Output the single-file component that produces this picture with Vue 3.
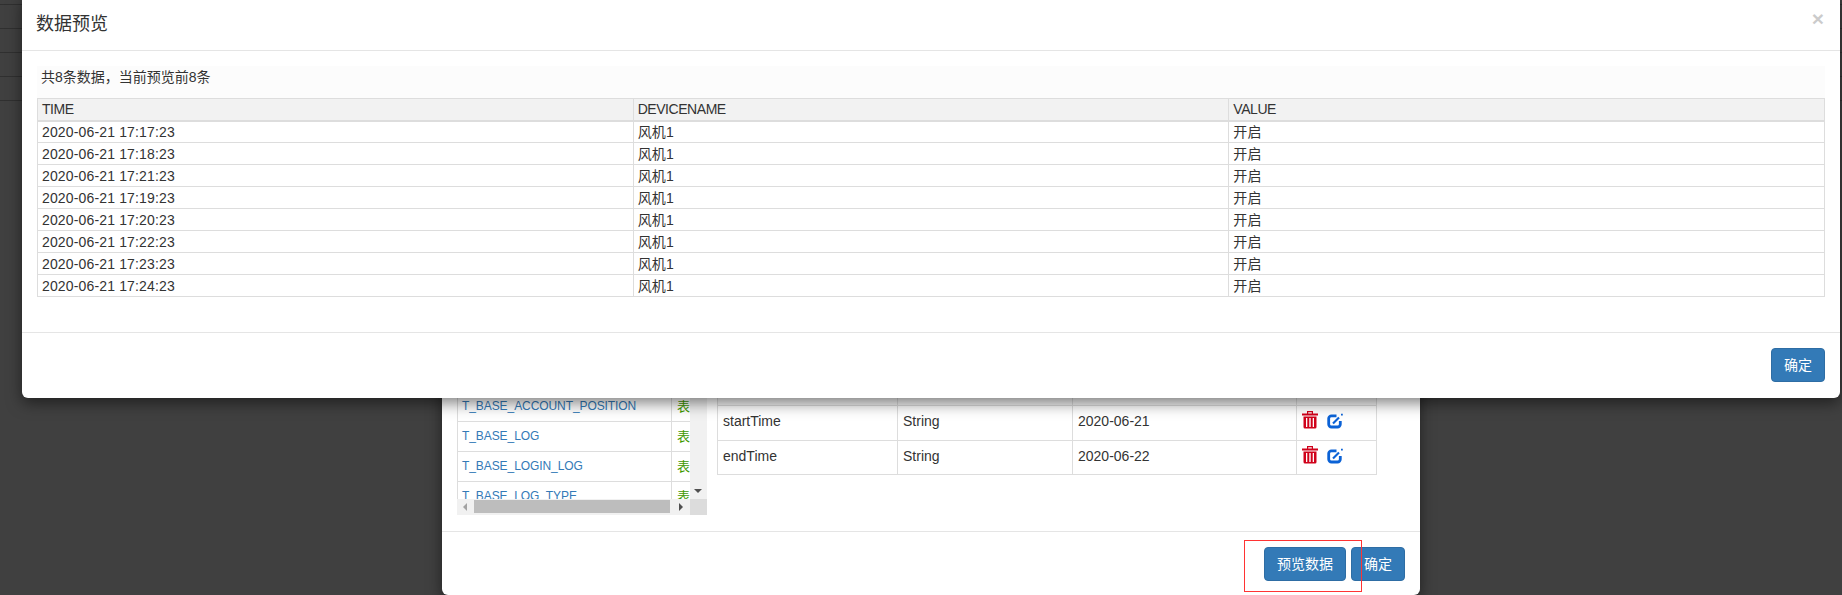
<script setup>
const times = ['17:17:23', '17:18:23', '17:21:23', '17:19:23', '17:20:23', '17:22:23', '17:23:23', '17:24:23']
const rows = times.map((t) => ({ time: `2020-06-21 ${t}`, device: '风机1', value: '开启' }))
const stripes = [0, 1, 2, 3, 4]
const tables = ['T_BASE_ACCOUNT_POSITION', 'T_BASE_LOG', 'T_BASE_LOGIN_LOG', 'T_BASE_LOG_TYPE']
const params = [
  { name: 'startTime', type: 'String', value: '2020-06-21' },
  { name: 'endTime', type: 'String', value: '2020-06-22' },
]
</script>

<template>
  <div class="stage">
    <div class="stripes">
      <div v-for="s in stripes" :key="s" class="stripe"></div>
    </div>

    <section class="modal back">
      <div class="back-body">
        <div class="tree">
          <div class="tree-view">
            <div v-for="t in tables" :key="t" class="tree-row">
              <a class="tree-name">{{ t }}</a>
              <span class="tree-kind">表</span>
            </div>
          </div>
          <div class="track-v"><i class="arrow-down"></i></div>
          <div class="track-h">
            <i class="arrow-left"></i>
            <div class="thumb"></div>
            <i class="arrow-right"></i>
          </div>
          <div class="corner"></div>
        </div>
        <table class="params">
          <colgroup>
            <col class="p1" /><col class="p2" /><col class="p3" /><col class="p4" />
          </colgroup>
          <tbody>
            <tr class="params-head"><td></td><td></td><td></td><td></td></tr>
            <tr v-for="p in params" :key="p.name">
              <td>{{ p.name }}</td>
              <td>{{ p.type }}</td>
              <td>{{ p.value }}</td>
              <td class="ops">
                <svg class="ico" width="16" height="18" viewBox="0 0 16 18">
                  <path fill="#d0021b" d="M5 0h6v2.5h5V4.500H0V2.500h5zM6.200 1.200v1.300h3.600V1.200z" fill-rule="evenodd" />
                  <path fill="#d0021b" d="M1.500 5.500h13V16a1.500 1.500 0 0 1-1.500 1.500H3A1.500 1.500 0 0 1 1.500 16zM4 7v9h1.300V7zm3.300 0v9h1.400V7zm3.400 0v9H12V7z" fill-rule="evenodd" />
                </svg>
                <svg class="ico edit" width="16" height="16" viewBox="0 0 16 16">
                  <path fill="none" stroke="#0b62d6" stroke-width="2.800" d="M9.500 2.800H4.500a2.800 2.800 0 0 0-2.800 2.800v5.600a2.800 2.800 0 0 0 2.800 2.800h6a2.800 2.800 0 0 0 2.800-2.800V8" />
                  <path fill="none" stroke="#0b62d6" stroke-width="2.200" d="M6 10.500 12 4.500" />
                  <path fill="#0b62d6" d="M14 .8h1.800v1.800H14z" />
                </svg>
              </td>
            </tr>
          </tbody>
        </table>
      </div>
      <footer class="back-foot">
        <button class="btn">预览数据</button>
        <button class="btn">确定</button>
      </footer>
    </section>

    <div class="annotation"></div>

    <section class="modal front">
      <header class="front-head">
        <h4 class="title">数据预览</h4>
        <span class="close">×</span>
      </header>
      <div class="front-body">
        <p class="info">共8条数据，当前预览前8条</p>
        <table class="data">
          <thead>
            <tr><th>TIME</th><th>DEVICENAME</th><th>VALUE</th></tr>
          </thead>
          <tbody>
            <tr v-for="r in rows" :key="r.time">
              <td>{{ r.time }}</td><td>{{ r.device }}</td><td>{{ r.value }}</td>
            </tr>
          </tbody>
        </table>
      </div>
      <footer class="front-foot">
        <button class="btn">确定</button>
      </footer>
    </section>
  </div>
</template>

<style>
html, body { margin: 0; background: #404040; }
</style>

<style scoped>
.stage {
  position: relative;
  width: 1842px;
  height: 595px;
  overflow: hidden;
  background: #404040;
  color: #333;
  font-family: "Liberation Sans", "Noto Sans CJK SC", sans-serif;
  font-size: 14px;
}
.stripes { display: flex; flex-direction: column; }
.stripe { height: 23px; border-bottom: 1px solid #303030; }
.stripe:first-child { height: 4px; }

.modal {
  position: absolute;
  display: flex;
  flex-direction: column;
  box-sizing: border-box;
  background: #fff;
  border-radius: 6px;
  box-shadow: 0 5px 15px rgba(0, 0, 0, .5);
}
.back { left: 442px; top: 376px; width: 978px; height: 219px; }
.front { left: 22px; top: -6px; width: 1818px; height: 404px; }

.btn {
  box-sizing: border-box;
  height: 34px;
  padding: 0 12px;
  border: 1px solid #2e6da4;
  border-radius: 4px;
  background: #337ab7;
  color: #fff;
  font: 14px/20px "Liberation Sans", "Noto Sans CJK SC", sans-serif;
}

/* background dialog */
.back-body {
  display: flex;
  gap: 10px;
  align-items: flex-start;
  height: 155px;
  box-sizing: border-box;
  padding: 16px 0 0 15px;
}
.tree {
  display: grid;
  grid-template-columns: 233px 17px;
  grid-template-rows: 107px 16px;
  width: 250px;
  font-size: 12px;
}
.tree-view { overflow: hidden; border-left: 1px solid #ddd; }
.tree-row {
  display: flex;
  box-sizing: border-box;
  height: 30px;
  width: 240px;
  border-bottom: 1px solid #ddd;
  line-height: 29px;
}
.tree-name { box-sizing: border-box; width: 214px; padding-left: 4px; color: #337ab7; border-right: 1px solid #ddd; letter-spacing: -.08px; }
.tree-kind { padding-left: 5px; color: #3f9a00; font-size: 13px; }
.track-v { position: relative; background: #f1f1f1; }
.arrow-down {
  position: absolute; left: 4px; bottom: 6px;
  border: 4px solid transparent; border-top: 4px solid #505050; border-bottom: 0;
}
.track-h { display: flex; align-items: center; background: #f1f1f1; padding-bottom: 1px; box-sizing: border-box; }
.thumb { width: 196px; height: 13px; margin: 0 9px 0 7px; background: #bdbdbd; }
.arrow-left { margin-left: 6px; border: 4px solid transparent; border-right: 4px solid #a3a3a3; border-left: 0; }
.arrow-right { border: 4px solid transparent; border-left: 4px solid #505050; border-right: 0; }
.corner { background: #dcdcdc; }

.params { border-collapse: collapse; table-layout: fixed; width: 659px; font-size: 14px; margin-top: -1px; }
.p1 { width: 180px; } .p2 { width: 175px; } .p3 { width: 224px; } .p4 { width: 80px; }
.params td {
  height: 34px;
  box-sizing: border-box;
  padding: 5px;
  border: 1px solid #ddd;
  vertical-align: top;
  line-height: 20px;
}
.params tr:nth-child(2) td { height: 35px; }
.params .params-head td { height: 14px; padding: 0; background: #f7f7f7; }
.ops { white-space: nowrap; }
.ico { display: inline-block; vertical-align: top; }
.edit { margin: 2px 0 0 9px; }

.back-foot {
  display: flex;
  justify-content: flex-end;
  gap: 5px;
  padding: 15px 15px 0;
  border-top: 1px solid #e5e5e5;
  flex: 1;
}

.annotation {
  position: absolute;
  left: 1244px;
  top: 540px;
  width: 116px;
  height: 50px;
  border: 1px solid #f33;
}

/* foreground dialog */
.front-head {
  display: flex;
  justify-content: space-between;
  height: 57px;
  box-sizing: border-box;
  padding: 6px 15px 0 14px;
  border-bottom: 1px solid #e5e5e5;
}
.title { margin: 0; font-size: 18px; font-weight: 400; line-height: 48px; }
.close { margin: 8px 1px 0 0; color: #000; opacity: .2; font-size: 21px; font-weight: 700; line-height: 21px; }
.front-body { padding: 15px 15px 35px; }
.info { margin: 0; height: 32px; box-sizing: border-box; padding: 1px 4px; background: #fcfcfc; line-height: 20px; }
.data { width: 100%; border-collapse: collapse; table-layout: fixed; }
.data th, .data td {
  padding: 0 5px 0 4px;
  border: 1px solid #ddd;
  height: 22px;
  box-sizing: border-box;
  line-height: 20px;
  font-weight: 400;
  text-align: left;
  letter-spacing: .15px;
}
.data th { background: #f2f2f2; border-bottom-width: 2px; letter-spacing: -.45px; }
.front-foot {
  display: flex;
  justify-content: flex-end;
  flex: 1;
  padding: 15px;
  border-top: 1px solid #e5e5e5;
}
</style>
